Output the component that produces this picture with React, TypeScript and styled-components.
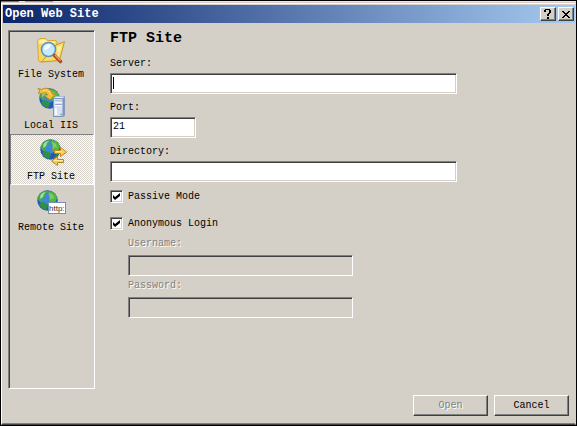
import React, { useState } from "react";
import styled, { createGlobalStyle, css } from "styled-components";

const face = "#d4d0c8";
const shadow = "#808080";
const dark = "#404040";

const GlobalStyle = createGlobalStyle`
  *, *::before, *::after { box-sizing: border-box; }
  body { margin: 0; background: #000; }
  body, button, input {
    font-family: "Liberation Mono", monospace;
    font-size: 10px;
    line-height: 14px;
    color: #000;
  }
`;

const raised = css`
  border: 1px solid;
  border-color: #fff ${dark} ${dark} #fff;
  box-shadow: inset -1px -1px 0 ${shadow};
`;

const Screen = styled.div`
  display: flex;
  flex-direction: column;
  min-height: 100vh;
  padding: 1px;
  background: #000;
`;

const Backdrop = styled.div`
  height: 2px;
  background: linear-gradient(90deg, #777 0 18px, #eee6e6 18px 24px, #99a 24px 52px, #eee6e6 52px);
  border-bottom: 1px solid #d8cccc;
`;

const Dialog = styled.main`
  flex: 1;
  display: flex;
  flex-direction: column;
  background: ${face};
  border: 1px solid;
  border-color: #fff ${face} ${dark} #fff;
  box-shadow: inset 0 -1px 0 ${shadow};
  padding: 1px 0 0 1px;
`;

const TitleBar = styled.header`
  display: flex;
  align-items: center;
  gap: 2px;
  height: 18px;
  padding: 0 1px 0 2px;
  background: linear-gradient(90deg, #0a246a, #a6caf0);
`;

const Title = styled.h1`
  flex: 1;
  margin: 0;
  font-size: 12px;
  line-height: 18px;
  color: #fff;
`;

const CaptionButton = styled.button`
  ${raised}
  display: grid;
  place-items: center;
  width: 16px;
  height: 14px;
  padding: 0;
  background: ${face};
`;

const Body = styled.div`
  flex: 1;
  display: flex;
  gap: 15px;
  padding: 7px 6px 8px 5px;
`;

const Sidebar = styled.nav`
  flex: none;
  width: 87px;
  margin-bottom: 27px;
  padding: 1px 0 0 1px;
  border: 1px solid;
  border-color: ${shadow} #fff #fff ${shadow};
  box-shadow: inset 1px 1px 0 ${dark};
`;

const SiteButton = styled.button<{ $active: boolean }>`
  display: flex;
  flex-direction: column;
  align-items: center;
  width: 100%;
  height: 51px;
  padding: 2px 2px 0 0;
  border: 1px solid transparent;
  background: transparent;
  line-height: 16px;
  white-space: nowrap;
  ${(p) =>
    p.$active &&
    css`
      border-color: ${shadow} #fff #fff ${shadow};
      background: repeating-conic-gradient(#fff 0 25%, ${face} 0 50%) 0 0 / 2px 2px;
    `}
`;

const Icon = styled.svg`
  display: block;
  flex: none;
  width: 32px;
  height: 32px;
`;

const Main = styled.form`
  flex: 1;
  display: flex;
  flex-direction: column;
  align-items: flex-start;
`;

const Heading = styled.h2`
  margin: 0 0 9px;
  font-size: 15px;
  line-height: 18px;
`;

const Stack = styled.div<{ $gap: number }>`
  display: flex;
  flex-direction: column;
  gap: ${(p) => p.$gap}px;
  width: 100%;
`;

const Credentials = styled(Stack)`
  padding: 7px 0 0 18px;
`;

const Field = styled.div<{ $gap?: number }>`
  display: flex;
  flex-direction: column;
  align-items: flex-start;
  gap: ${(p) => p.$gap ?? 2}px;
`;

const Label = styled.label<{ $off?: boolean }>`
  ${(p) =>
    p.$off &&
    css`
      color: ${shadow};
      text-shadow: 1px 1px 0 #fff;
    `}
`;

const InputFrame = styled.div<{ $max: number }>`
  position: relative;
  width: 100%;
  max-width: ${(p) => p.$max}px;
`;

const TextInput = styled.input`
  display: block;
  width: 100%;
  height: 21px;
  padding: 1px 2px 3px;
  border: 1px solid;
  border-color: ${shadow} #fff #fff ${shadow};
  border-radius: 0;
  outline: 0;
  background: #fff;
  box-shadow: inset 1px 1px 0 ${dark}, inset -1px -1px 0 ${face};
  &:disabled {
    background: ${face};
  }
`;

const Caret = styled.span`
  position: absolute;
  left: 3px;
  top: 4px;
  width: 1px;
  height: 12px;
  background: #000;
`;

const CheckRow = styled.label`
  display: flex;
  align-items: center;
  gap: 5px;
  height: 13px;
`;

const Check = styled.input`
  appearance: none;
  width: 13px;
  height: 13px;
  margin: 0;
  border: 1px solid;
  border-color: ${shadow} #fff #fff ${shadow};
  background: #fff;
  box-shadow: inset 1px 1px 0 ${dark}, inset -1px -1px 0 ${face};
  display: grid;
  place-items: center;
  &:checked::before {
    content: "";
    width: 7px;
    height: 7px;
    background: #000;
    clip-path: polygon(0 29%, 29% 57%, 100% 0, 100% 43%, 29% 100%, 0 71%);
  }
`;

const Options = styled(Stack)`
  padding-top: 8px;
`;

const Actions = styled.footer`
  display: flex;
  justify-content: flex-end;
  gap: 6px;
  width: 100%;
  margin-top: auto;
`;

const ActionButton = styled.button`
  ${raised}
  width: 75px;
  height: 21px;
  padding: 0;
  background: ${face};
  &:disabled {
    color: ${shadow};
    text-shadow: 1px 1px 0 #fff;
  }
`;

const Globe = ({ x, y }: { x: number; y: number }) => (
  <g transform={`translate(${x} ${y})`}>
    <circle cx="10.5" cy="10.5" r="10.2" fill="#2458b4" />
    <circle cx="9" cy="8" r="7" fill="#3f86dc" />
    <path d="M2 5C4 2 7 .5 10 .4l1 1.6-3 2 1 2-3 2-1 4-3-1-1.700-3z" fill="#48a850" />
    <path d="M12 1c4 .5 7 3 8 7l-2 5-3-1-2 1-1-4 2-3-3-2z" fill="#55b83e" />
    <path d="M5 12l4 1 2 3-2 4c-3-.5-6-3-7-6z" fill="#2f9148" />
    <path d="M17 14l2 0-2 4-4 2.200z" fill="#35803e" />
    <path d="M3.500 5C5 3 7 2 9 2L7 4 6 7 3 9z" fill="#b4edbc" opacity=".8" />
    <path d="M12 3l4 2 1 4-2-1-2 2z" fill="#8ad75d" opacity=".8" />
  </g>
);

const FolderIcon = () => (
  <Icon viewBox="0 0 32 32" aria-hidden="true">
    <path d="M2.500 5.500l2-2h6l2 2h8.500l1 2v17.500l-17 2-1.500-2z" fill="#f6d869" stroke="#d8a936" />
    <path d="M4 6l2-1.500h4l2 2h8v2H4z" fill="#fff1a8" />
    <path d="M21 10l8.500-3.500-5 19-18 1.500z" fill="#fbdc68" stroke="#c99527" />
    <path d="M22 12l5-2-4 14" fill="#fff0a0" />
    <circle cx="13.5" cy="14.500" r="7" fill="#c6ebff" stroke="#5a93c4" strokeWidth="1.600" />
    <path d="M9 15c0-4 3-6 7-5.500-1 3-3 5-7 5.500z" fill="#fff" />
    <path d="M19.500 20.500l6 6" stroke="#b64d23" strokeWidth="3.600" strokeLinecap="round" />
    <path d="M20 20l5.500 5.500" stroke="#f0a06a" strokeWidth="1.200" />
  </Icon>
);

const ServerIcon = () => (
  <Icon viewBox="0 0 32 32" aria-hidden="true">
    <Globe x={4} y={2} />
    <path d="M3 2.500l4 1C10 1 16 2 17.500 8h3L15 14 8.500 9h4C11.500 6.500 9 6 7 8L3 7l2-2z" fill="#f5bd38" stroke="#b57c18" strokeWidth=".8" />
    <path d="M7.500 5C11 3 14.500 4 15.500 9" fill="none" stroke="#ffe28a" />
    <path d="M18 12.500l2.500-2.500H30v19.500l-2 1.500H18z" fill="#8797c0" />
    <path d="M18.500 12.500h9.500v18h-9.500z" fill="#d5e0f4" stroke="#7f91bd" />
    <path d="M18.500 12l2.500-1.500h8.500L28 12z" fill="#fff" stroke="#a3b2d2" strokeWidth=".6" />
    <path d="M20 15h7M20 18.500h7" stroke="#94a9cf" />
    <path d="M20 16.200h7M20 19.700h7" stroke="#fff" />
    <path d="M20 22v7h2v-7z" fill="#f5f9ff" />
    <path d="M25.500 28.500H27" stroke="#4dbb37" strokeWidth="1.500" />
  </Icon>
);

const FtpIcon = () => (
  <Icon viewBox="0 0 32 32" aria-hidden="true">
    <Globe x={5} y={2} />
    <path d="M19.500 13.500h6v-3l6 4.500-6 4.500v-3h-6z" fill="#ffd154" stroke="#bd821c" />
    <path d="M28.500 22.500h-6v-3l-6 4.500 6 4.500v-3h6z" fill="#ffcb4b" stroke="#bd821c" />
    <path d="M20.500 14.500h6M19 23.500h9" stroke="#fff0a0" />
  </Icon>
);

const HttpIcon = () => (
  <Icon viewBox="0 0 32 32" aria-hidden="true">
    <Globe x={2} y={2} />
    <rect x="13.500" y="14.500" width="17" height="11" fill="#fff" stroke="#6e91b5" />
    <text x="14" y="23" fontFamily="Liberation Sans, sans-serif" fontSize="8" fill="#333">
      http:
    </text>
  </Icon>
);

const sites = [
  { name: "File System", Art: FolderIcon },
  { name: "Local IIS", Art: ServerIcon },
  { name: "FTP Site", Art: FtpIcon },
  { name: "Remote Site", Art: HttpIcon },
];

export default function App() {
  const [site, setSite] = useState("FTP Site");
  const [server, setServer] = useState("");
  const [passive, setPassive] = useState(true);
  const [anonymous, setAnonymous] = useState(true);

  return (
    <Screen>
      <GlobalStyle />
      <Backdrop />
      <Dialog>
        <TitleBar>
          <Title>Open Web Site</Title>
          <CaptionButton type="button" aria-label="Help">
            <svg width="8" height="10" viewBox="0 0 8 10" shapeRendering="crispEdges">
              <path d="M1 0h5v1H1zM0 1h2v2H0zM5 1h2v3H5zM4 4h2v1H4zM3 5h2v2H3zM3 8h2v2H3z" />
            </svg>
          </CaptionButton>
          <CaptionButton type="button" aria-label="Close">
            <svg width="8" height="7" viewBox="0 0 8 7" shapeRendering="crispEdges">
              <path d="M0 0h2v1H0zM6 0h2v1H6zM1 1h2v1H1zM5 1h2v1H5zM2 2h4v1H2zM3 3h2v1H3zM2 4h4v1H2zM1 5h2v1H1zM5 5h2v1H5zM0 6h2v1H0zM6 6h2v1H6z" />
            </svg>
          </CaptionButton>
        </TitleBar>
        <Body>
          <Sidebar>
            {sites.map(({ name, Art }) => (
              <SiteButton key={name} type="button" $active={site === name} onClick={() => setSite(name)}>
                <Art />
                {name}
              </SiteButton>
            ))}
          </Sidebar>
          <Main onSubmit={(e) => e.preventDefault()}>
            <Heading>{site}</Heading>
            <Stack $gap={7}>
              <Field>
                <Label htmlFor="server">Server:</Label>
                <InputFrame $max={347}>
                  <TextInput id="server" value={server} onChange={(e) => setServer(e.target.value)} />
                  {server === "" && <Caret />}
                </InputFrame>
              </Field>
              <Field>
                <Label htmlFor="port">Port:</Label>
                <InputFrame $max={86}>
                  <TextInput id="port" defaultValue="21" />
                </InputFrame>
              </Field>
              <Field>
                <Label htmlFor="directory">Directory:</Label>
                <InputFrame $max={347}>
                  <TextInput id="directory" />
                </InputFrame>
              </Field>
            </Stack>
            <Options $gap={14}>
              <CheckRow>
                <Check type="checkbox" checked={passive} onChange={(e) => setPassive(e.target.checked)} />
                Passive Mode
              </CheckRow>
              <CheckRow>
                <Check type="checkbox" checked={anonymous} onChange={(e) => setAnonymous(e.target.checked)} />
                Anonymous Login
              </CheckRow>
            </Options>
            <Credentials $gap={3}>
              <Field $gap={4}>
                <Label htmlFor="username" $off={anonymous}>Username:</Label>
                <InputFrame $max={225}>
                  <TextInput id="username" disabled={anonymous} />
                </InputFrame>
              </Field>
              <Field $gap={4}>
                <Label htmlFor="password" $off={anonymous}>Password:</Label>
                <InputFrame $max={225}>
                  <TextInput id="password" type="password" disabled={anonymous} />
                </InputFrame>
              </Field>
            </Credentials>
            <Actions>
              <ActionButton type="submit" disabled={server === ""}>Open</ActionButton>
              <ActionButton type="button">Cancel</ActionButton>
            </Actions>
          </Main>
        </Body>
      </Dialog>
    </Screen>
  );
}
